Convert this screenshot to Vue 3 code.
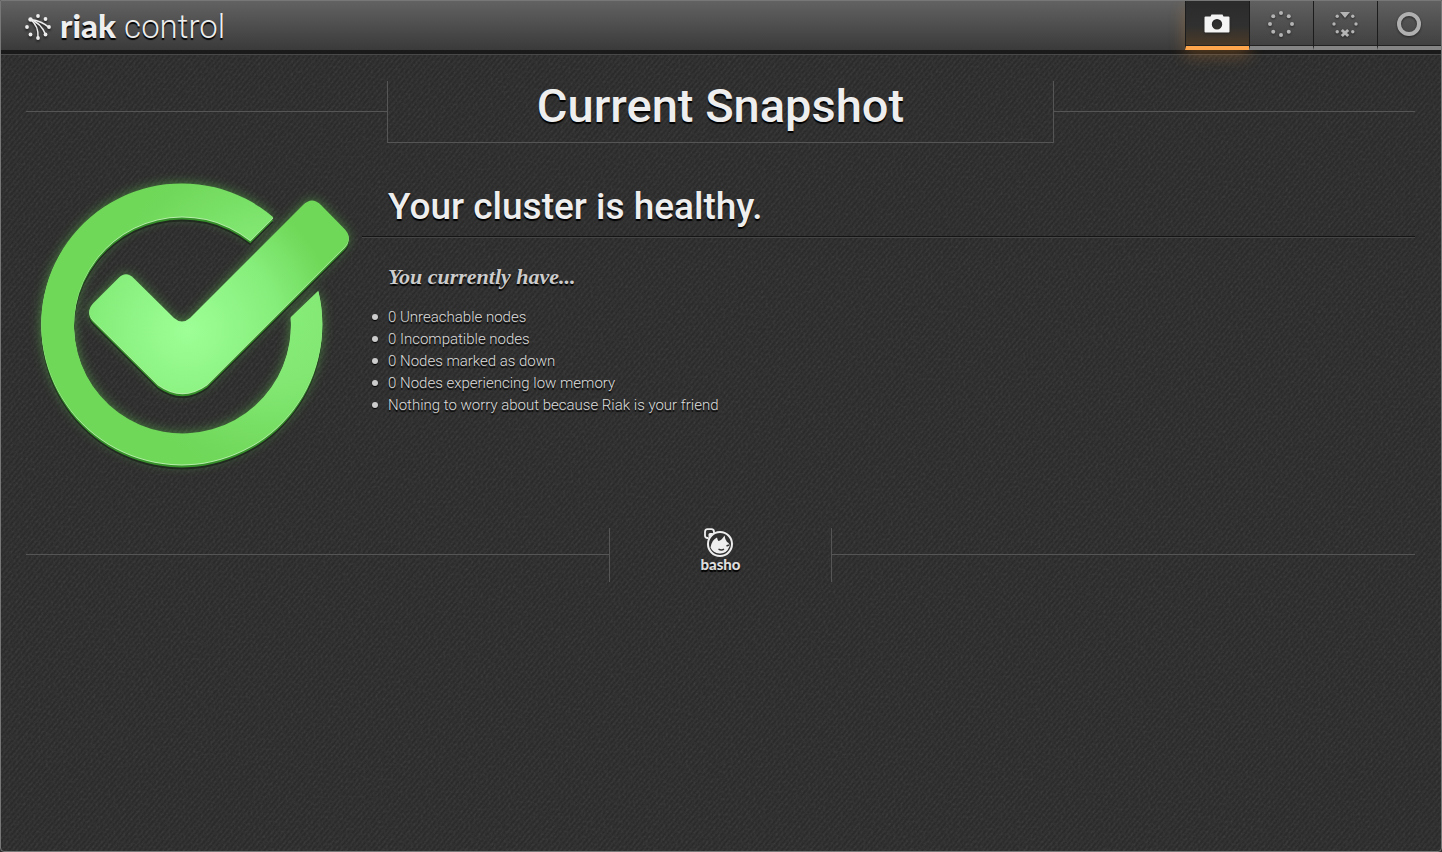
<script setup>
import { ref } from 'vue'

const active = ref('snapshot')
const tabs = [
  { id: 'snapshot', label: 'Current Snapshot' },
  { id: 'cluster', label: 'Cluster Management' },
  { id: 'nodes', label: 'Node Management' },
  { id: 'ring', label: 'Ring Status' }
]
const dots = Array.from({ length: 8 }, (_, i) => ({
  x: 16 + 11 * Math.cos((i * Math.PI) / 4),
  y: 16 + 11 * Math.sin((i * Math.PI) / 4)
}))
const sideDots = dots.filter((d, i) => i !== 2 && i !== 6)
const facts = [
  '0 Unreachable nodes',
  '0 Incompatible nodes',
  '0 Nodes marked as down',
  '0 Nodes experiencing low memory',
  'Nothing to worry about because Riak is your friend'
]
</script>

<template>
  <div class="page">
    <svg class="grain" aria-hidden="true">
      <filter id="grain-filter" x="0" y="0" width="100%" height="100%">
        <feTurbulence type="fractalNoise" baseFrequency="0.4" numOctaves="2" seed="4" />
        <feColorMatrix values="0 0 0 0 1  0 0 0 0 1  0 0 0 0 1  1.2 0 0 0 -0.5" />
      </filter>
      <rect width="100%" height="100%" filter="url(#grain-filter)" />
    </svg>

    <header class="bar">
      <a class="brand" href="#">
        <svg class="brand-mark" viewBox="0 0 28 28" aria-hidden="true">
          <g fill="none" stroke="#eee" stroke-width="1.500">
            <path d="M6.500 7.500Q18 9 25 15.500" />
            <path d="M6.500 7.500Q17 11 21.500 22.500" />
            <path d="M6.500 7.500Q15 14 14 26" />
          </g>
          <g fill="#eee">
            <circle cx="14" cy="4" r="1.900" />
            <circle cx="21.500" cy="7" r="1.900" />
            <circle cx="6.500" cy="7.500" r="2.200" />
            <circle cx="3" cy="15" r="1.900" />
            <circle cx="6.500" cy="22.500" r="1.900" />
            <circle cx="14" cy="26" r="1.900" />
            <circle cx="21.500" cy="22.500" r="1.900" />
            <circle cx="25" cy="15" r="1.900" />
          </g>
        </svg>
        <span class="brand-name"><b>riak</b> <span class="light">control</span></span>
      </a>
      <nav class="tabs">
        <button
          v-for="tab in tabs"
          :key="tab.id"
          class="tab"
          :class="{ active: active === tab.id }"
          type="button"
          :aria-label="tab.label"
          @click="active = tab.id"
        >
          <svg class="tab-icon" viewBox="0 0 32 32" aria-hidden="true">
            <path
              v-if="tab.id === 'snapshot'"
              fill="#f4f4f4"
              fill-rule="evenodd"
              d="M4.500 8.500H9.500L10.500 6.500h11L22.500 8.500h5q1 0 1 1v14q0 1-1 1h-23q-1 0-1-1V9.500q0-1 1-1zM16 11a5.200 5.200 0 1 0 0 10.400A5.200 5.200 0 1 0 16 11z"
            />
            <g v-else-if="tab.id === 'cluster'" fill="#b4b4b4">
              <circle v-for="(d, i) in dots" :key="i" :cx="d.x" :cy="d.y" r="2" />
            </g>
            <g v-else-if="tab.id === 'nodes'" fill="#b4b4b4">
              <circle v-for="(d, i) in sideDots" :key="i" :cx="d.x" :cy="d.y" r="1.700" />
              <path d="M11 4h10l-5 6z" />
              <path d="M12.800 22l6.400 6M19.200 22l-6.400 6" stroke="#b4b4b4" stroke-width="3" />
            </g>
            <circle v-else cx="16" cy="16" r="10" fill="none" stroke="#b0b0b0" stroke-width="4" />
          </svg>
        </button>
      </nav>
    </header>

    <main class="content">
      <div class="title-row">
        <h1>Current Snapshot</h1>
      </div>

      <section class="health">
        <svg class="badge" viewBox="20 160 342 322" role="img" aria-label="Healthy">
          <defs>
            <radialGradient id="check-fill" gradientUnits="userSpaceOnUse" cx="188" cy="330" r="150">
              <stop offset="0" stop-color="#9dff96" />
              <stop offset="0.600" stop-color="#86ee7b" />
              <stop offset="1" stop-color="#6fd858" />
            </radialGradient>
            <radialGradient id="ring-fill" gradientUnits="userSpaceOnUse" cx="270" cy="310" r="180">
              <stop offset="0" stop-color="#88ee7a" />
              <stop offset="0.400" stop-color="#82e873" />
              <stop offset="0.850" stop-color="#70d85a" />
              <stop offset="1" stop-color="#6fd858" />
            </radialGradient>
            <filter id="glow" x="-20%" y="-20%" width="140%" height="140%">
              <feGaussianBlur stdDeviation="6" />
            </filter>
            <path
              id="ring-shape"
              d="M273.300 217.300A140.500 140.500 0 1 0 318.300 290.700L290.700 317.300A108.500 108.500 0 1 1 250.300 240.300Z"
            />
            <path
              id="check-shape"
              d="M118.500 278Q126 270.500 133.500 278L174 318Q182 325 190 318L303 205Q312 196 321 205L344.500 229Q353 238 344.500 247L207 384.500Q182.500 402 158 384.500L93 320Q85.500 312 93 303.500Z"
            />
          </defs>
          <g filter="url(#glow)" fill="#62d94e" opacity="0.500">
            <use href="#ring-shape" />
            <use href="#check-shape" />
          </g>
          <g fill="#202a1f" transform="translate(0 5)">
            <use href="#ring-shape" />
            <use href="#check-shape" />
          </g>
          <g fill="#36912a" transform="translate(0 3)">
            <use href="#ring-shape" />
            <use href="#check-shape" />
          </g>
          <g fill="#b5eca9" transform="translate(0 1)">
            <use href="#ring-shape" />
            <use href="#check-shape" />
          </g>
          <use href="#ring-shape" fill="url(#ring-fill)" />
          <use href="#check-shape" fill="url(#check-fill)" />
        </svg>

        <div class="report">
          <h2>Your cluster is healthy.</h2>
          <h3>You currently have...</h3>
          <ul>
            <li v-for="fact in facts" :key="fact">{{ fact }}</li>
          </ul>
        </div>
      </section>
    </main>

    <footer class="footer">
      <a class="basho" href="#">
        <svg class="basho-mark" viewBox="0 0 34 30" aria-hidden="true">
          <circle cx="16" cy="16" r="12" fill="#303030" stroke="#eee" stroke-width="2" />
          <path
            d="M4.500 10H3.500Q1 10 1 7.500V4Q1 1.200 3.500 1.200H7.500Q10 1.200 10 4V5"
            fill="none"
            stroke="#eee"
            stroke-width="1.800"
          />
          <path d="M4.500 9V6.500Q4.500 5 6 5H9L8 8Z" fill="#eee" />
          <path
            fill="#eee"
            d="M6.500 19.500Q8 11.500 13 9.500Q13.500 12 14.500 13Q17.500 12.500 20.500 7.500Q21 11.500 23 14Q26 15.500 25.500 18.500Q22.500 26 15.500 25.500Q9 25 6.500 19.500Z"
          />
          <path d="M14.500 21.200q3 1.500 5.500 0M22.500 18l2.500-1" stroke="#333" stroke-width="1.500" fill="none" />
        </svg>
        <span>basho</span>
      </a>
    </footer>
  </div>
</template>

<style>
body {
  background: #2e2e2e;
}
</style>

<style scoped>
.page {
  position: relative;
  box-sizing: border-box;
  min-height: 100vh;
  border: 1px solid #777;
  border-radius: 0 0 4px 4px;
  overflow: hidden;
  color: #ccc;
  font-family: Roboto, "Liberation Sans", sans-serif;
  text-shadow: 0 2px 1px #000;
  background:
    repeating-linear-gradient(130deg, #292929 0, #343434 2px, #292929 4px);
}

.grain {
  position: absolute;
  inset: 0;
  width: 100%;
  height: 100%;
  opacity: 0.09;
  pointer-events: none;
}

.bar {
  position: relative;
  display: flex;
  justify-content: space-between;
  height: 49px;
  border-bottom: 4px solid #1a1a1a;
  background: linear-gradient(#626262, #3a3a3a);
  box-shadow: 0 1px 0 #484848;
}

.brand {
  display: flex;
  align-items: center;
  gap: 8px;
  padding-left: 23px;
  color: #eee;
  text-decoration: none;
}

.brand-mark {
  width: 28px;
  height: 28px;
  filter: drop-shadow(0 2px 1px #222);
}

.brand-name {
  font-size: 33px;
  line-height: 48px;
}

.brand-name b {
  font-family: Lato, sans-serif;
  font-weight: 900;
}

.light {
  font-weight: 300;
}

.tabs {
  display: flex;
}

.tab {
  display: flex;
  align-items: center;
  justify-content: center;
  box-sizing: border-box;
  width: 64px;
  height: 49px;
  margin: 0;
  padding: 0 2px 0 0;
  border: 0;
  border-left: 1px solid #1c1c1c;
  border-bottom: 4px solid #858585;
  background: linear-gradient(#606060, #404040);
  box-shadow: inset 0 -1px 0 #222;
}

.tab.active {
  border-bottom-color: #ffa64d;
  background: linear-gradient(#2b2b2b, #303030 55%, #4c3a26);
  box-shadow: inset 0 -1px 0 #222, 0 6px 16px rgba(255, 150, 40, 0.25);
}

.tab-icon {
  width: 32px;
  height: 32px;
  filter: drop-shadow(0 1px 1px #222);
}

.content {
  position: relative;
  padding: 27px 26px 0 25px;
}

.title-row,
.footer {
  display: flex;
  align-items: center;
}

.title-row::before,
.title-row::after,
.footer::before,
.footer::after {
  content: "";
  flex: 1;
  height: 1px;
  margin-bottom: 2px;
  background: #555;
}

h1,
h2,
h3,
ul {
  margin: 0;
}

h1 {
  box-sizing: border-box;
  width: 48%;
  height: 62px;
  border: 1px solid #555;
  border-top: 0;
  color: #eee;
  font-size: 47px;
  font-weight: 500;
  line-height: 50px;
  text-align: center;
}

.health {
  display: flex;
  padding-top: 17px;
}

.badge {
  flex: none;
  width: 342px;
  height: 322px;
  margin-left: -6px;
}

.report {
  flex: 1;
}

h2 {
  padding: 22px 0 4px 26px;
  border-bottom: 1px solid #151515;
  box-shadow: 0 1px 0 #454545;
  color: #eee;
  font-size: 37px;
  font-weight: 500;
  line-height: 50px;
}

h3 {
  padding: 24px 0 0 26px;
  font-family: "Liberation Serif", serif;
  font-size: 22px;
  font-style: italic;
  font-weight: 700;
  line-height: 32px;
}

ul {
  padding: 13px 0 0 26px;
  font-size: 15px;
  font-weight: 300;
  line-height: 22px;
  list-style: none;
}

li {
  position: relative;
  color: #ddd;
}

li::before {
  content: "";
  position: absolute;
  top: 8px;
  left: -16px;
  width: 6px;
  height: 6px;
  border-radius: 50%;
  background: #ccc;
  box-shadow: 0 1px 1px #000;
}

.footer {
  position: relative;
  padding: 46px 26px 0 25px;
}

.basho {
  display: flex;
  flex-direction: column;
  align-items: center;
  box-sizing: border-box;
  width: 16%;
  height: 54px;
  border: solid #555;
  border-width: 0 1px;
  color: #ddd;
  font-family: Lato, sans-serif;
  font-size: 15px;
  font-weight: 900;
  line-height: 12px;
  text-decoration: none;
}

.basho-mark {
  width: 34px;
  height: 30px;
}
</style>
